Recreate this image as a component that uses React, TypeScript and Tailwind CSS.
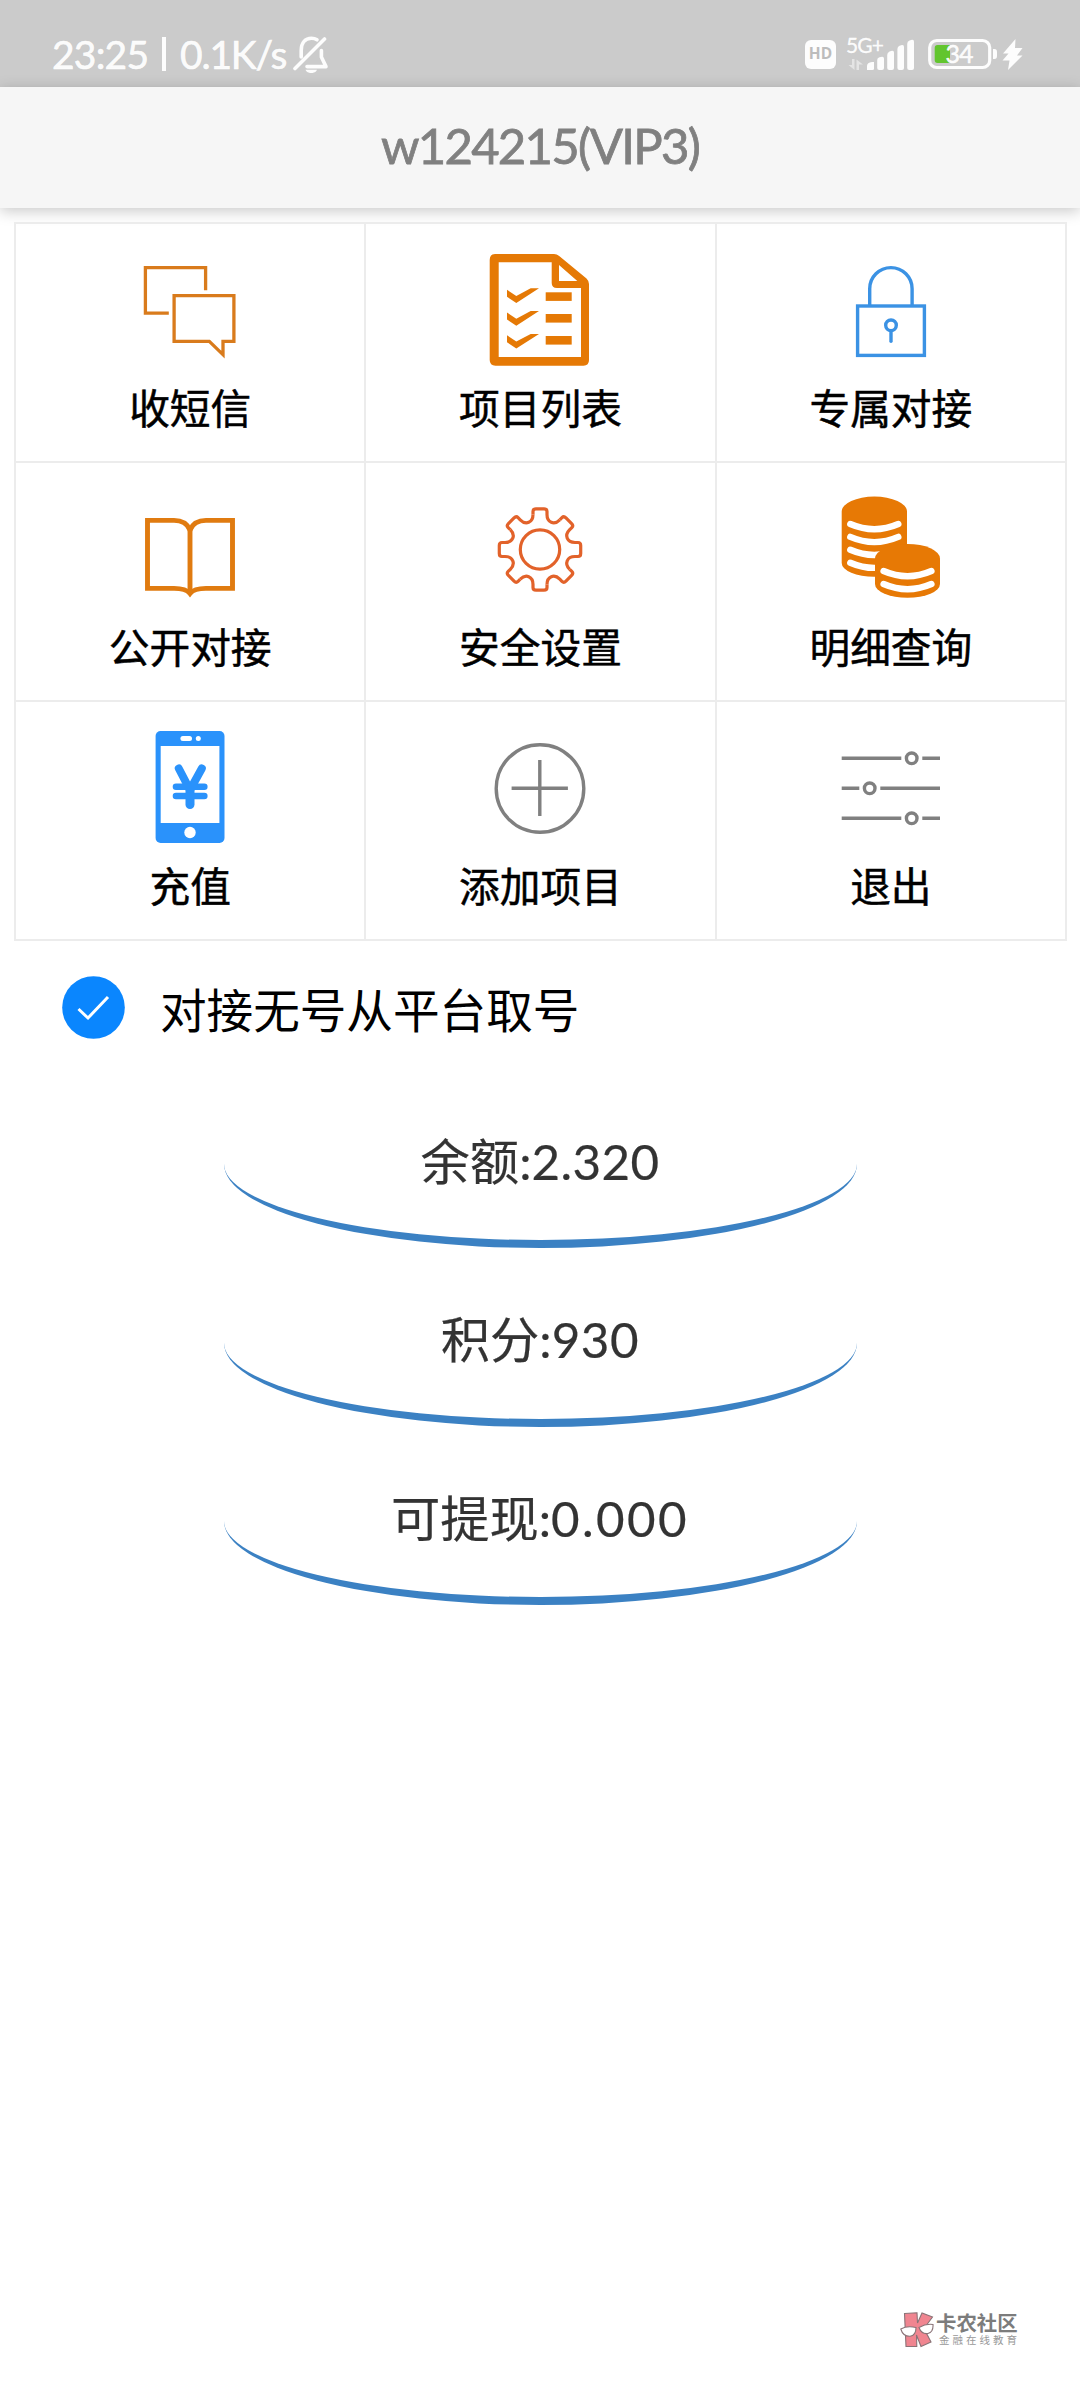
import type { ReactNode } from 'react';

// ── Icons ─────────────────────────────────────────────────────────────────────

function Icon({ children, className }: { children: ReactNode; className: string }) {
  return (
    <svg viewBox="0 0 112 112" fill="none" className={`h-[112px] w-[112px] overflow-visible ${className}`}>
      {children}
    </svg>
  );
}

function ChatIcon() {
  return (
    <Icon className="text-[#d97b1c]">
      <g stroke="currentColor" strokeWidth="3.3">
        <path d="M71.6 36.3V13.6H11.4V59.1H34.8" />
        <path d="M40.1 41.6H99.9V87.4H89V100.6L75.3 87.4H40.1Z" />
      </g>
    </Icon>
  );
}

function ListIcon() {
  return (
    <Icon className="text-[#e57905]">
      <path
        fill="currentColor"
        fillRule="evenodd"
        d="M11 0H70Q73 0 75.5 2.3L102.5 24.5Q105 27 105 30V106Q105 111.7 99.5 111.7H11.5Q5.7 111.7 5.7 106V6Q5.7 0 11 0ZM14.7 8.3V103H97V34H73Q67.7 34 67.7 29V8.3ZM75 11V27H93.3Z"
      />
      {[0, 22.8, 45.6].map((y) => (
        <path key={y} fill="currentColor" transform={`translate(0 ${y})`} d="M23 35.7L32.3 42L46.7 34.3H55L32.3 49L23 42.7Z" />
      ))}
      {[38.3, 60, 82].map((y) => (
        <rect key={y} fill="currentColor" x="61.7" y={y} width="26" height="8.6" />
      ))}
    </Icon>
  );
}

function LockIcon() {
  return (
    <Icon className="text-[#3b92e4]">
      <g stroke="currentColor" strokeWidth="3.4">
        <rect x="22.6" y="52" width="66.8" height="49.4" />
        <path d="M34.7 51V34.8A21.2 21.2 0 0 1 77.1 34.8V51" />
        <circle cx="56" cy="71.3" r="5.3" />
        <path d="M56 77V87.2" strokeLinecap="round" />
      </g>
    </Icon>
  );
}

function BookIcon() {
  return (
    <Icon className="text-[#e07b10]">
      <g stroke="currentColor" strokeWidth="4.9">
        <path d="M13.5 27.4H40Q52 27.4 56 37Q60 27.4 72 27.4H98.5V95.4H72Q60 95.4 56 100.5Q52 95.4 40 95.4H13.5Z" />
        <path d="M56 36V101" />
      </g>
    </Icon>
  );
}

function GearIcon() {
  return (
    <Icon className="text-[#e2622a]">
      <g stroke="currentColor" strokeWidth="3.2" transform="translate(56 56.5)">
        {[0, 45, 90, 135, 180, 225, 270, 315].map((a) => (
          <path
            key={a}
            transform={`rotate(${a})`}
            d="M-7 -35V-38Q-7 -40.7 -4 -40.7H4Q7 -40.7 7 -38V-35C7 -27 14.1 -24 19.8 -29.7"
          />
        ))}
        <circle r="19.7" />
      </g>
    </Icon>
  );
}

function CoinsIcon() {
  return (
    <Icon className="text-[#e77905]">
      <path fill="currentColor" d="M6.7 18.5A32.6 15 0 0 1 72 18.5V70A32.6 13.7 0 0 1 6.7 70Z" />
      {[31, 43.9, 56.8, 69.7].map((y) => (
        <path key={y} stroke="white" strokeWidth="6.4" strokeLinecap="round" d={`M15.3 ${y}Q39.3 ${y + 10.4} 63.3 ${y}`} />
      ))}
      <path fill="currentColor" d="M40 65.5A32.5 14.5 0 0 1 105 65.5V91A32.5 13.7 0 0 1 40 91Z" />
      {[78, 91].map((y) => (
        <path key={y} stroke="white" strokeWidth="6.4" strokeLinecap="round" d={`M48.6 ${y}Q72.5 ${y + 10.4} 96.4 ${y}`} />
      ))}
    </Icon>
  );
}

function PhoneIcon() {
  return (
    <Icon className="text-[#2a92fb]">
      <rect fill="currentColor" x="21.6" y="-1" width="68.9" height="112" rx="5" />
      <rect fill="white" x="26.7" y="14" width="58.7" height="77" />
      <rect fill="white" x="46.4" y="4" width="11.6" height="5" rx="2.5" />
      <circle fill="white" cx="64.3" cy="6.5" r="2.5" />
      <circle fill="white" cx="56" cy="100.5" r="5.7" />
      <g stroke="currentColor" strokeLinecap="round">
        <path strokeWidth="8" d="M44.8 36.5L56 58L67.8 36.5" />
        <path strokeWidth="9" d="M56 56V72.5" />
        <path strokeWidth="6.6" d="M42 54.7H70.3M42 64H70.3" />
      </g>
    </Icon>
  );
}

function PlusIcon() {
  return (
    <Icon className="text-[#808080]">
      <g stroke="currentColor" strokeWidth="3.4">
        <circle cx="56" cy="56.5" r="43.8" />
        <path d="M27.6 56.3H83.9M55.8 28V84" />
      </g>
    </Icon>
  );
}

function SlidersIcon() {
  return (
    <Icon className="text-[#808080]">
      <g stroke="currentColor" strokeWidth="3.4">
        <path d="M6.7 26.3H66.3M87.3 26.3H105M6.7 56.3H24.3M45.3 56.3H105M6.7 86.3H66.3M87.3 86.3H105" />
        <circle cx="76.7" cy="26.3" r="5.3" />
        <circle cx="34.7" cy="56.3" r="5.3" />
        <circle cx="76.7" cy="86.3" r="5.3" />
      </g>
    </Icon>
  );
}

// ── Data ──────────────────────────────────────────────────────────────────────

const MENU = [
  { label: '收短信', icon: <ChatIcon /> },
  { label: '项目列表', icon: <ListIcon /> },
  { label: '专属对接', icon: <LockIcon /> },
  { label: '公开对接', icon: <BookIcon /> },
  { label: '安全设置', icon: <GearIcon /> },
  { label: '明细查询', icon: <CoinsIcon /> },
  { label: '充值', icon: <PhoneIcon /> },
  { label: '添加项目', icon: <PlusIcon /> },
  { label: '退出', icon: <SlidersIcon /> },
];

const STATS = [
  { label: '余额', value: '2.320', tracking: 'tracking-[0.4px]' },
  { label: '积分', value: '930', tracking: 'tracking-[0.6px]' },
  { label: '可提现', value: '0.000', tracking: 'tracking-[2.4px]' },
];

// ── Status bar ────────────────────────────────────────────────────────────────

function StatusBar() {
  return (
    <div className="flex h-[87px] items-start justify-between bg-[#cbcbcb] pt-[35px] pr-[57px] pl-[52px] text-white/95">
      <div className="flex h-[38px] items-center text-[39px] leading-[38px] [-webkit-text-stroke:0.6px]">
        <span className="w-[94px] tracking-[-0.8px]">23:25</span>
        <span className="ml-[16px] h-[34px] w-[4px] bg-white/95" />
        <span className="ml-[14px] w-[106px] tracking-[-1.2px]">0.1K/s</span>
        <svg viewBox="0 0 36 38" fill="none" className="ml-[7px] h-[38px] w-[36px]">
          <g stroke="currentColor" strokeWidth="3.6" strokeLinecap="round" strokeLinejoin="round">
            <path d="M2 33.5L31.5 4" />
            <path d="M8.2 22V15.5C8.2 7.5 12.5 3.2 18.4 3.2C20.6 3.2 22.4 3.7 24 4.8" />
            <path d="M28.4 15.5V22L33 31.6H14" />
          </g>
          <path fill="currentColor" d="M12.5 34.8H24C22.5 39.2 14 39.2 12.5 34.8Z" />
        </svg>
      </div>

      <div className="flex h-[38px] items-center">
        <span className="flex h-[29px] w-[31px] items-center justify-center rounded-[6px] bg-white/95 font-['Open_Sans'] text-[15.5px] font-bold text-[#bcbcbc]">
          HD
        </span>
        <div className="ml-[10px] flex h-[38px] w-[70px] flex-col">
          <svg viewBox="0 0 70 38" className="h-[38px] w-[70px] overflow-visible" fill="currentColor">
            <text x="0" y="17.500" fontSize="21" textLength="38" stroke="currentColor" strokeWidth="0.3">5G+</text>
            <path opacity="0.5" d="M6 24H8.5V35L2.5 30H6ZM10.5 35V24.5L17 29.5H13V35Z" />
            <path d="M21 35V31Q21 27.5 26 27H28V33.5Q28 35 26.5 35Z" />
            <path d="M31.2 33V25Q31.2 23 33.5 22.3L36 21.7Q38 21.5 38 23.5V33Q38 35 36 35H33.2Q31.2 35 31.2 33Z" />
            <path d="M41.2 33V20Q41.2 17.7 43.5 16.6L46 15.8Q48 15.5 48 17.5V33Q48 35 46 35H43.2Q41.2 35 41.2 33Z" />
            <path d="M51.4 33V14Q51.4 11.7 53.5 10.8L56 10.1Q58 9.8 58 12V33Q58 35 56 35H53.4Q51.4 35 51.4 33Z" />
            <path d="M61.2 33V9Q61.2 6.5 63.5 5.6L66 4.8Q68 4.5 68 6.8V33Q68 35 66 35H63.2Q61.2 35 61.2 33Z" />
          </svg>
        </div>
        <svg viewBox="0 0 95 38" className="ml-[12px] h-[38px] w-[95px] overflow-visible" fill="none">
          <rect x="1.7" y="5.5" width="60" height="27" rx="7" stroke="currentColor" strokeWidth="3.2" />
          <path fill="#62c52e" d="M9.5 10H22V28H9.5Q6.7 28 6.7 25V13Q6.7 10 9.5 10Z" />
          <path fill="currentColor" d="M65 14H66.5Q69 14 69 17V21Q69 24 66.5 24H65Z" />
          <text x="17.5" y="28" fontSize="25" textLength="28" fill="currentColor" stroke="currentColor" strokeWidth="0.5">34</text>
          <path fill="currentColor" d="M87.5 4L75 18.5H80.500L74.500 25.500H81.5L80 35L94.500 20.500H89L94.500 13H87Z" />
        </svg>
      </div>
    </div>
  );
}

// ── Watermark ─────────────────────────────────────────────────────────────────

function Watermark() {
  return (
    <div className="mt-auto mr-[61px] mb-[52px] flex items-start self-end">
      <svg viewBox="0 0 34 36" className="h-[36px] w-[34px]" stroke="#8a7377" strokeWidth="1.1">
        <path fill="#f08590" d="M4.5 1.500L17 0.800L17.500 11L22 1L32.500 5L24 16.500L31 30L21 34.500L16.500 23L16.800 34.500H6Z" />
        <path fill="white" d="M0.800 17Q7 13.500 16 15.500Q16 23.500 10 24.300Q3 24.500 0.800 17Z" />
        <path fill="white" d="M19 15.500Q26 11.500 33 12.500Q33.500 20 28 21.500Q21.500 22.500 19 15.500Z" />
      </svg>
      <div className="ml-[2px] flex flex-col">
        <span className="text-[20.4px] leading-[22px] font-bold text-[#7c7c7c]">卡农社区</span>
        <span className="ml-[3px] w-[80px] text-[10.5px] leading-[13px] tracking-[3px] whitespace-nowrap text-[#999]">金融在线教育</span>
      </div>
    </div>
  );
}

// ── Page ──────────────────────────────────────────────────────────────────────

export default function App() {
  return (
    <div className="flex min-h-[2400px] w-[1080px] flex-col bg-white font-[Lato,'Noto_Sans_CJK_SC',sans-serif]">
      <StatusBar />

      <header className="flex h-[121px] items-center justify-center bg-[#f6f6f6] pb-[3px] text-[49px] tracking-[-1.7px] text-[#808080] shadow-[0_3px_14px_rgba(0,0,0,0.22)] [-webkit-text-stroke:0.8px]">
        w124215(VIP3)
      </header>

      <div className="mt-[14px] ml-[14px] grid w-[1053px] grid-cols-3 border-t-2 border-l-2 border-[#ececec]">
        {MENU.map((m) => (
          <div key={m.label} className="flex h-[239px] flex-col items-center border-r-2 border-b-2 border-[#ececec] pt-[30px]">
            {m.icon}
            <span className="mt-[21px] text-[40.7px] leading-[44px] text-black [-webkit-text-stroke:0.5px]">{m.label}</span>
          </div>
        ))}
      </div>

      <div className="mt-[35px] ml-[62px] flex h-[63px] items-center">
        <svg viewBox="0 0 63 63" fill="none" className="h-[63px] w-[63px]">
          <circle cx="31.500" cy="31.500" r="31.300" fill="#0a86fe" />
          <path d="M16.500 33L26 42L46 21" stroke="white" strokeWidth="3" />
        </svg>
        <span className="mt-[4px] ml-[35px] text-[46.6px] leading-[50px] text-black">对接无号从平台取号</span>
      </div>

      <div className="mt-[41px] flex flex-col items-center gap-[10.5px]">
        {STATS.map((s) => (
          <div
            key={s.label}
            className="flex h-[168px] w-[633px] items-center justify-center rounded-[50%] border-b-8 border-[#3b81c3] pt-[3px] text-[49.3px] text-[#333] [-webkit-text-stroke:0.2px]"
          >
            <span>{s.label}:</span>
            <span className={s.tracking}>{s.value}</span>
          </div>
        ))}
      </div>

      <Watermark />
    </div>
  );
}
